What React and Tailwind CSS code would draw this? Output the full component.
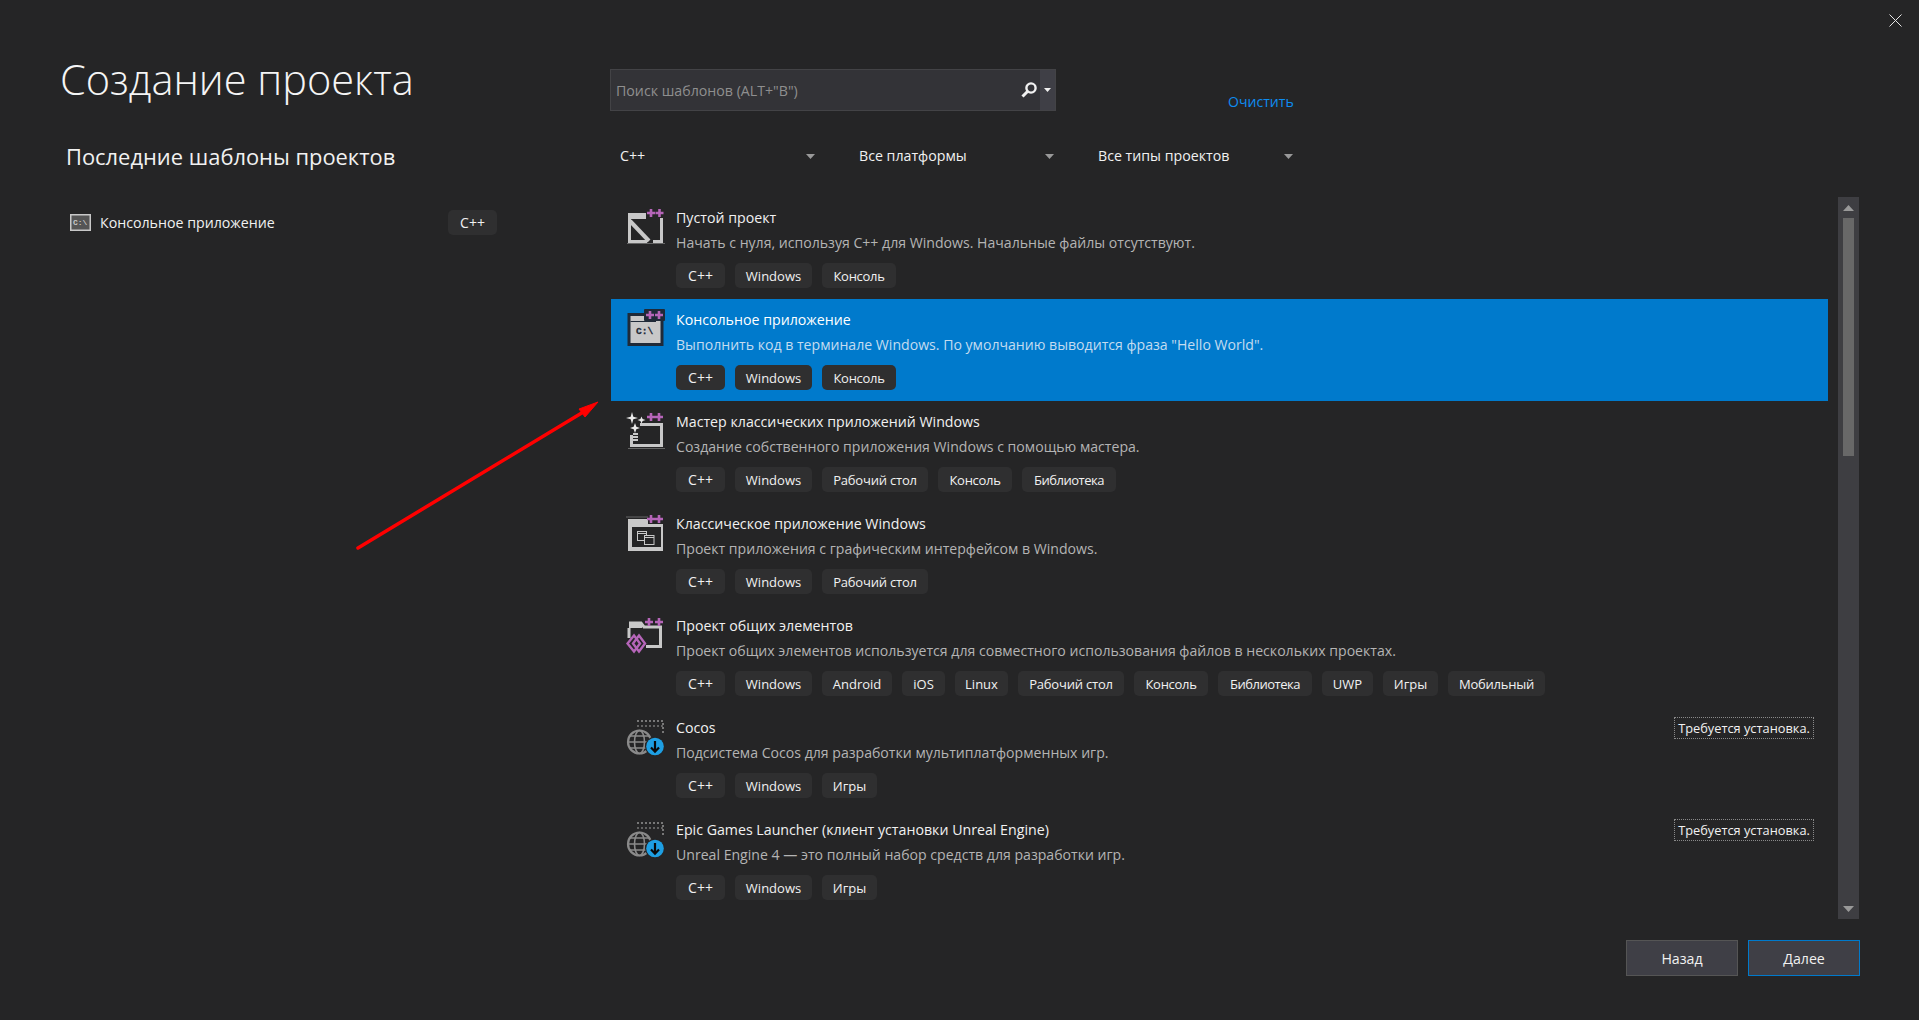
import React from "react";

const G = "#c8c8c8";
const P = "#b565b8";

function Pluses({ a = 25, b = 33.5, y = 6, halo }) {
  const d = (x) => `M${x - 4} ${y}H${x + 4}M${x} ${y - 4}V${y + 4}`;
  return (
    <g>
      {halo && <rect x={a - 6} y={y - 6} width={b - a + 12} height={12} fill={halo} rx="1" />}
      <path d={d(a) + d(b)} stroke={P} strokeWidth="2.6" fill="none" />
    </g>
  );
}

function EmptyIcon() {
  return (
    <svg width="40" height="40" viewBox="0 0 40 40" fill="none">
      <path d="M1 36.5H39" stroke="#666" />
      <path d="M2 6H20V12H2Z" fill={G} />
      <path d="M3.5 12V33.5" stroke={G} strokeWidth="3" />
      <path d="M35.5 11V34.5H27M2 34.5H21" stroke={G} strokeWidth="3" />
      <path d="M4 14L23 34" stroke={G} strokeWidth="4" />
      <Pluses />
    </svg>
  );
}

function ConsoleIcon() {
  return (
    <svg width="40" height="40" viewBox="0 0 40 40" fill="none">
      <rect x="1.5" y="4" width="36" height="33" fill="#1f2a38" />
      <rect x="4.5" y="7" width="30" height="27" fill={G} />
      <path d="M4.5 12.5H30" stroke="#1f2a38" />
      <text x="10" y="24.5" fontFamily="'Liberation Mono', monospace" fontWeight="700" fontSize="9.5" fill="#1f2a38" stroke="#1f2a38" strokeWidth=".3">C:\</text>
      <Pluses halo="#1f2a38" a={24} b={33} />
    </svg>
  );
}

function WizardIcon() {
  return (
    <svg width="40" height="40" viewBox="0 0 40 40" fill="none">
      <path d="M2 37.5H39" stroke="#666" />
      <path d="M14 13.5H35.5V34.5H5.5V24" stroke={G} strokeWidth="3" />
      <path d="M6 1L7.3 5.7L12 7L7.3 8.3L6 13L4.7 8.3L0 7L4.7 5.7Z" fill="#ebebeb" />
      <path d="M15.5 5.5L16.6 8L19.5 9L16.6 10L15.5 12.5L14.4 10L11.5 9L14.4 8Z" fill="#ebebeb" />
      <path d="M9 12L10.3 15.7L14 17L10.3 18.3L9 22L7.7 18.3L4 17L7.7 15.7Z" fill="#ebebeb" />
      <path d="M7 23H12M7 26H12M7 29H12" stroke={G} strokeWidth="2" />
      <Pluses a={25} b={33} y={6} />
    </svg>
  );
}

function DesktopIcon() {
  return (
    <svg width="40" height="40" viewBox="0 0 40 40" fill="none">
      <path d="M0 4H22" stroke="#666" />
      <path d="M2 6H22V11H37V38H2Z" fill={G} />
      <rect x="6" y="14" width="29" height="20" fill="#252526" />
      <rect x="11.5" y="18.5" width="9" height="9" stroke={G} />
      <rect x="18.5" y="22.5" width="9.5" height="9" stroke={G} fill="#252526" />
      <path d="M11.5 20.5H20.5M18.5 24.5H28" stroke={G} />
      <Pluses a={25} b={33} y={6} />
    </svg>
  );
}

function SharedIcon() {
  return (
    <svg width="40" height="40" viewBox="0 0 40 40" fill="none">
      <path d="M3 8H15L18 12H34.5V31.5H20" stroke={G} strokeWidth="3" fill="none" />
      <path d="M3 9H16V13H3Z" fill={G} />
      <path d="M3 13V23" stroke={G} strokeWidth="3" />
      <path d="M8 20.5L1.5 28.5L8 36.5L14 28.5Z" stroke={P} strokeWidth="2.4" />
      <path d="M13 20.5L19 28.5L13 36.5L7 28.5Z" stroke={P} strokeWidth="2.4" />
      <Pluses a={23} b={33} y={7} />
    </svg>
  );
}

function GlobeIcon() {
  return (
    <svg width="40" height="40" viewBox="0 0 40 40" fill="none">
      <path d="M11 4H37V17" stroke="#777" strokeWidth="2" strokeDasharray="2 2" />
      <path d="M11 9H37" stroke="#777" strokeWidth="1.5" strokeDasharray="2 2" />
      <circle cx="13.5" cy="25" r="11.5" stroke="#8a8a8a" strokeWidth="2.2" />
      <ellipse cx="13.5" cy="25" rx="5" ry="11.5" stroke="#8a8a8a" strokeWidth="1.6" />
      <path d="M2 25H25M4 19H23M4 31H23" stroke="#8a8a8a" strokeWidth="1.6" />
      <circle cx="29" cy="29.5" r="10" fill="#252526" />
      <circle cx="29" cy="29.5" r="8.8" fill="#1e9fe3" />
      <path d="M29 24V34.5M25 30.5L29 34.7L33 30.5" stroke="#0a0a0a" strokeWidth="2.2" />
    </svg>
  );
}

const tagClass = {
  "C++": "w-[49px] text-[14px]",
  Windows: "w-[77px] pt-[2px] text-[13px]",
  Android: "w-[70px] pt-[2px] text-[13px]",
  iOS: "w-[43px] pt-[2px] text-[13px]",
  Linux: "w-[53px] pt-[2px] text-[13px]",
  "Рабочий стол": "w-[106px] pt-[2px] text-[13px] tracking-[-0.2px]",
  Консоль: "w-[74px] pt-[2px] text-[13px] tracking-[-0.3px]",
  Библиотека: "w-[94px] pt-[2px] text-[13px] tracking-[-0.5px]",
  UWP: "w-[51px] pt-[2px] text-[13px]",
  Игры: "w-[55px] pt-[2px] text-[13px]",
  Мобильный: "w-[97px] pt-[2px] text-[13px] tracking-[-0.25px]",
};

function Tag({ children }) {
  return (
    <span className={`flex h-[25px] items-center justify-center rounded-[5px] bg-[#2f2f30] text-[#f1f1f1] ${tagClass[children]}`}>
      {children}
    </span>
  );
}

const rows = [
  { I: EmptyIcon, t: "Пустой проект", d: "Начать с нуля, используя C++ для Windows. Начальные файлы отсутствуют.", g: ["C++", "Windows", "Консоль"] },
  { I: ConsoleIcon, s: true, t: "Консольное приложение", d: "Выполнить код в терминале Windows. По умолчанию выводится фраза \"Hello World\".", g: ["C++", "Windows", "Консоль"] },
  { I: WizardIcon, t: "Мастер классических приложений Windows", d: "Создание собственного приложения Windows с помощью мастера.", g: ["C++", "Windows", "Рабочий стол", "Консоль", "Библиотека"] },
  { I: DesktopIcon, t: "Классическое приложение Windows", d: "Проект приложения с графическим интерфейсом в Windows.", g: ["C++", "Windows", "Рабочий стол"] },
  { I: SharedIcon, t: "Проект общих элементов", d: "Проект общих элементов используется для совместного использования файлов в нескольких проектах.", g: ["C++", "Windows", "Android", "iOS", "Linux", "Рабочий стол", "Консоль", "Библиотека", "UWP", "Игры", "Мобильный"] },
  { I: GlobeIcon, b: true, t: "Cocos", d: "Подсистема Cocos для разработки мультиплатформенных игр.", g: ["C++", "Windows", "Игры"] },
  { I: GlobeIcon, b: true, t: "Epic Games Launcher (клиент установки Unreal Engine)", d: "Unreal Engine 4 — это полный набор средств для разработки игр.", g: ["C++", "Windows", "Игры"] },
];

function Row({ I, s, b, t, d, g }) {
  return (
    <div className={`flex h-[102px] pl-[15px] pr-[14px] ${s ? "bg-[#007acc]" : ""}`}>
      <div className="mt-[10px] h-10 w-10 shrink-0"><I /></div>
      <div className="ml-[10px] flex flex-1 flex-col">
        <div className={`mt-[11px] h-5 text-[14.2px] leading-5 ${s ? "text-white" : "text-[#f1f1f1]"}`}>{t}</div>
        <div className={`mt-[5px] h-5 text-[14.1px] leading-5 ${s ? "text-[#c4dcf0]" : "text-[#b4b4b4]"}`}>{d}</div>
        <div className="mt-[10px] flex gap-[10px]">{g.map((x) => <Tag key={x}>{x}</Tag>)}</div>
      </div>
      {b && (
        <div className="mt-[10px] flex h-[22px] w-[140px] items-center justify-center border border-dotted border-[#8a8a8a] pt-[2px] text-[12.8px] text-[#f1f1f1]">
          Требуется установка.
        </div>
      )}
    </div>
  );
}

function Filter({ label }) {
  return (
    <div className="flex w-[195px] items-center justify-between">
      <span className="text-[14.2px] text-[#f1f1f1]">{label}</span>
      <svg width="9" height="5" viewBox="0 0 9 5"><path d="M0 0H9L4.5 5Z" fill="#999" /></svg>
    </div>
  );
}

export default function App() {
  return (
    <div
      className="relative flex h-[1020px] w-[1919px] overflow-hidden bg-[#252526]"
      style={{ fontFamily: "'Open Sans', 'Noto Sans', sans-serif" }}
    >
      <div className="w-[610px] shrink-0">
        <h1 className="ml-[60px] mt-[51px] h-[56px] text-[41.5px] font-light leading-[56px] text-[#f5f5f5]">Создание проекта</h1>
        <h2 className="ml-[66px] mt-[34px] h-8 text-[21.9px] leading-8 text-[#f1f1f1]">Последние шаблоны проектов</h2>
        <div className="ml-[70px] mt-[37px] flex h-[25px] w-[427px] items-center">
          <svg width="21" height="17" viewBox="0 0 21 17" fill="none">
            <rect x="0.75" y="0.75" width="19.5" height="15.5" fill="#555" stroke={G} strokeWidth="1.5" />
            <text x="3" y="11" fontFamily="'Liberation Mono', monospace" fontWeight="700" fontSize="8" fill={G}>C:\</text>
          </svg>
          <span className="ml-[9px] flex-1 pt-[1px] text-[14.2px] text-[#f1f1f1]">Консольное приложение</span>
          <Tag>C++</Tag>
        </div>
      </div>

      <div className="w-[1309px] shrink-0">
        <div className="mt-[69px] flex h-[42px] items-start">
          <div className="flex h-[42px] w-[446px] items-center border border-[#434346] bg-[#333337] pl-[5px]">
            <span className="flex-1 pt-[1px] text-[14.2px] text-[#8f8f8f]">Поиск шаблонов (ALT+"В")</span>
            <svg className="mr-[2px]" width="18" height="18" viewBox="0 0 18 18" fill="none">
              <circle cx="11" cy="7" r="4.6" stroke="#f1f1f1" strokeWidth="2.4" />
              <path d="M7.5 10.5L2.5 15.5" stroke="#f1f1f1" strokeWidth="3" />
            </svg>
            <div className="flex h-full w-[15px] items-center justify-center bg-[#3f3f46]">
              <svg width="7" height="4" viewBox="0 0 7 4"><path d="M0 0H7L3.5 4Z" fill="#f1f1f1" /></svg>
            </div>
          </div>
          <span className="ml-[172px] mt-[22px] text-[14.1px] leading-[22px] text-[#0e8cf0]">Очистить</span>
        </div>
        <div className="ml-[10px] mt-[35px] flex h-5 items-center gap-[44px]">
          <Filter label="C++" />
          <Filter label="Все платформы" />
          <Filter label="Все типы проектов" />
        </div>
        <div className="mt-[31px] ml-[1px] flex h-[722px]">
          <div className="w-[1217px] overflow-hidden">
            {rows.map((r) => <Row key={r.t} {...r} />)}
          </div>
          <div className="relative ml-[10px] w-[21px] bg-[#3e3e42]">
            <svg className="absolute left-[5px] top-[8px]" width="11" height="6" viewBox="0 0 11 6"><path d="M0 6H11L5.5 0Z" fill="#999" /></svg>
            <div className="absolute left-[5px] top-[21px] h-[238px] w-[11px] bg-[#686868]" />
            <svg className="absolute bottom-[7px] left-[5px]" width="11" height="6" viewBox="0 0 11 6"><path d="M0 0H11L5.5 6Z" fill="#999" /></svg>
          </div>
        </div>
        <div className="ml-[1016px] mt-[21px] flex gap-[10px]">
          <button className="h-9 w-[112px] border border-[#555] bg-[#3f3f46] pt-[2px] text-[14.2px] text-[#f1f1f1]">Назад</button>
          <button className="h-9 w-[112px] border border-[#007acc] bg-[#3f3f46] pt-[2px] text-[14.2px] text-[#f1f1f1]">Далее</button>
        </div>
      </div>

      <svg className="absolute right-[17px] top-[14px]" width="13" height="13" viewBox="0 0 13 13" fill="none">
        <path d="M0.5 0.5L12.5 12.5M12.5 0.5L0.5 12.5" stroke="#e6e6e6" />
      </svg>

      <svg className="pointer-events-none absolute left-[350px] top-[395px]" width="256" height="160" viewBox="350 395 256 160" fill="none">
        <path d="M358 548L585 411" stroke="#ff0000" strokeWidth="3.5" strokeLinecap="round" />
        <path d="M598 402L579 409L585 417Z" fill="#ff0000" stroke="#ff0000" />
      </svg>
    </div>
  );
}
